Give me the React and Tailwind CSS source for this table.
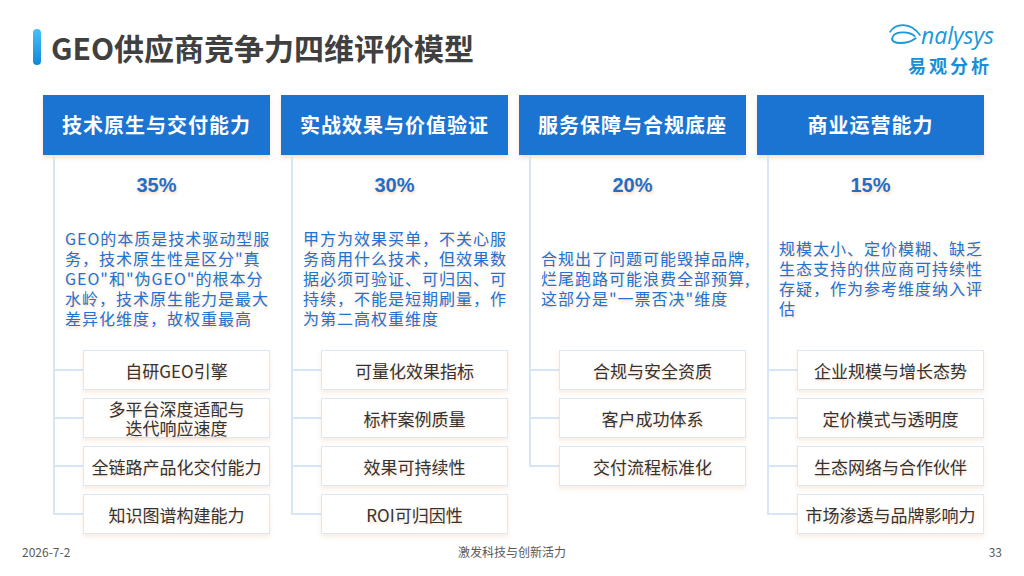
import React from "react";

const cjk = { fontFamily: '"Noto Sans CJK SC", "Noto Sans", sans-serif' };

const columns = [
  {
    title: "技术原生与交付能力",
    pct: "35%",
    desc: [
      "GEO的本质是技术驱动型服",
      "务，技术原生性是区分\"真",
      "GEO\"和\"伪GEO\"的根本分",
      "水岭，技术原生能力是最大",
      "差异化维度，故权重最高",
    ],
    items: [["自研GEO引擎"], ["多平台深度适配与", "迭代响应速度"], ["全链路产品化交付能力"], ["知识图谱构建能力"]],
  },
  {
    title: "实战效果与价值验证",
    pct: "30%",
    desc: [
      "甲方为效果买单，不关心服",
      "务商用什么技术，但效果数",
      "据必须可验证、可归因、可",
      "持续，不能是短期刷量，作",
      "为第二高权重维度",
    ],
    items: [["可量化效果指标"], ["标杆案例质量"], ["效果可持续性"], ["ROI可归因性"]],
  },
  {
    title: "服务保障与合规底座",
    pct: "20%",
    desc: ["合规出了问题可能毁掉品牌,", "烂尾跑路可能浪费全部预算,", "这部分是\"一票否决\"维度"],
    items: [["合规与安全资质"], ["客户成功体系"], ["交付流程标准化"]],
  },
  {
    title: "商业运营能力",
    pct: "15%",
    desc: ["规模太小、定价模糊、缺乏", "生态支持的供应商可持续性", "存疑，作为参考维度纳入评", "估"],
    items: [["企业规模与增长态势"], ["定价模式与透明度"], ["生态网络与合作伙伴"], ["市场渗透与品牌影响力"]],
  },
];

const Logo = () => (
  <div className="flex flex-col items-end mr-[30px] mt-[22px]">
    <div className="flex items-end">
      <svg width="32" height="24" viewBox="0 0 30 22" className="mb-[1px]">
        <path d="M1 9 C 6 1, 20 -1, 29 12" fill="none" stroke="#1a98d8" strokeWidth="1.6" strokeLinecap="round" />
        <path d="M24 13 C 19 8, 4 8, 3 15 C 2 21, 17 21, 25 15" fill="none" stroke="#1a98d8" strokeWidth="1.8" strokeLinecap="round" />
      </svg>
      <span className="text-[23px] leading-[24px] italic text-[#1a98d8]" style={{ fontFamily: '"Open Sans", sans-serif' }}>
        nalysys
      </span>
    </div>
    <div className="text-[18px] leading-[22px] font-bold text-[#1a8fd6] tracking-[3px] mt-[7px] mr-[2px]" style={cjk}>
      易观分析
    </div>
  </div>
);

const Column = ({ col }) => (
  <div className="w-[227px] flex flex-col">
    <div className="h-[60px] bg-[#1b74d1] flex items-center justify-center shadow-[0_3px_4px_rgba(240,170,110,0.35)]">
      <span className="text-white text-[20px] font-bold tracking-[1px]" style={cjk}>
        {col.title}
      </span>
    </div>
    <div className="ml-[10px] border-l-2 border-[#d6e6f6]">
      <div className="h-[55px] pt-[18px] pr-[12px] text-center">
        <span
          className="text-[20px] leading-[24px] font-bold text-[#1f6fc9] [text-shadow:1px_2px_3px_rgba(240,150,70,0.35)]"
          style={{ fontFamily: '"Liberation Sans", Arial, sans-serif' }}
        >
          {col.pct}
        </span>
      </div>
      <div className="h-[140px] flex flex-col justify-center pl-[10px] pb-[4px]">
        {col.desc.map((line, i) => (
          <div
            key={i}
            className="whitespace-nowrap text-[16px] leading-[20px] tracking-[1px] text-[#2272d0] [text-shadow:1px_2px_3px_rgba(240,150,70,0.35)]"
            style={cjk}
          >
            {line}
          </div>
        ))}
      </div>
    </div>
    <div className="ml-[10px] flex flex-col">
      {col.items.map((item, i) => {
        const last = i === col.items.length - 1;
        return (
          <div key={i} className="flex">
            <div className="w-[30px] flex flex-col">
              <div className="h-[21px] border-l-2 border-b-2 border-[#d6e6f6]" />
              <div className={"flex-1 " + (last ? "" : "border-l-2 border-[#d6e6f6]")} />
            </div>
            <div className="flex-1 pb-[8px]">
              <div className="h-[40px] bg-white border border-[#dbe7f5] flex flex-col items-center justify-center shadow-[0_3px_4px_rgba(245,185,130,0.25)]">
                {item.map((t, j) => (
                  <div
                    key={j}
                    className="text-[17px] leading-[19px] text-[#333333] whitespace-nowrap [text-shadow:1px_2px_3px_rgba(240,150,70,0.3)]"
                    style={cjk}
                  >
                    {t}
                  </div>
                ))}
              </div>
            </div>
          </div>
        );
      })}
    </div>
  </div>
);

export default function App() {
  return (
    <div className="w-[1024px] h-[576px] bg-white overflow-hidden flex flex-col">
      <div className="flex justify-between h-[95px]">
        <div className="flex items-center pl-[33px] h-[98px] pb-[4px]">
          <div className="w-[8px] h-[36px] rounded-full bg-gradient-to-b from-[#46c1f5] to-[#0a88dc]" />
          <h1 className="ml-[10px] text-[30px] font-bold text-[#404040] leading-[36px]" style={cjk}>
            GEO供应商竞争力四维评价模型
          </h1>
        </div>
        <Logo />
      </div>
      <div className="flex gap-[11px] pl-[43px]">
        {columns.map((c, i) => (
          <Column key={i} col={c} />
        ))}
      </div>
      <div className="h-[20px] grid grid-cols-3 items-center px-[22px] text-[12px] text-[#595959]" style={cjk}>
        <span>2026-7-2</span>
        <span className="text-center">激发科技与创新活力</span>
        <span className="text-right">33</span>
      </div>
    </div>
  );
}
